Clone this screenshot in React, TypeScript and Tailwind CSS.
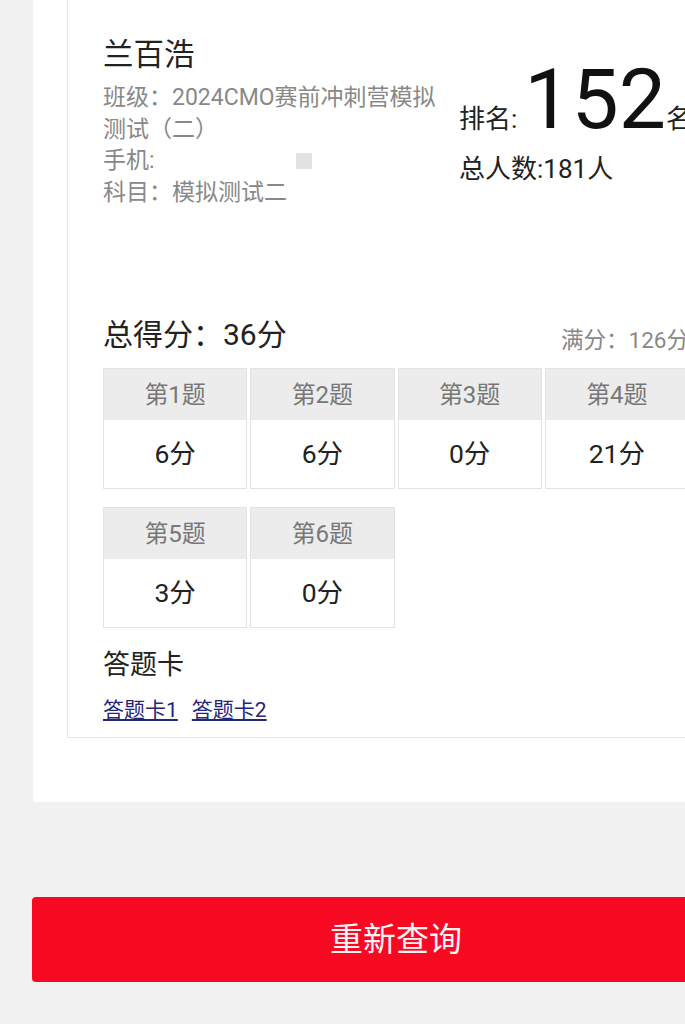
import React from "react";

const scores = [
  { q: "第1题", s: "6分" },
  { q: "第2题", s: "6分" },
  { q: "第3题", s: "0分" },
  { q: "第4题", s: "21分" },
  { q: "第5题", s: "3分" },
  { q: "第6题", s: "0分" },
];

export default function App() {
  return (
    <div className="w-full min-h-[1024px] overflow-hidden bg-[#f1f1f1] font-['Roboto','Noto_Sans_CJK_SC',sans-serif]">
      <div className="w-[792px]">
        <div className="mx-[33px] bg-white pb-[64px]">
          <div className="mx-[34px] border-x border-b border-[#e6e6e6] px-[35px] pt-[35px] pb-[13px]">
            {/* header */}
            <div className="flex">
              <div className="w-[344px] shrink-0">
                <div className="text-[30.5px] leading-[40px] text-[#222]">兰百浩</div>
                <div className="mt-[7px] text-[23px] leading-[31.5px] text-[#888]">
                  <div>班级：2024CMO赛前冲刺营模拟测试（二）</div>
                  <div>
                    手机:
                    <span className="ml-[141px] inline-block h-[16px] w-[16px] bg-[#e2e2e2] align-[-1px]"></span>
                  </div>
                  <div>科目：模拟测试二</div>
                </div>
              </div>
              <div className="ml-[12px] pt-[23px] text-[#222] whitespace-nowrap">
                <div className="flex items-baseline leading-none">
                  <span className="text-[26px]">排名:</span>
                  <span className="ml-[7px] text-[84px] text-[#111]">152</span>
                  <span className="text-[26px]">名</span>
                </div>
                <div className="mt-[10px] text-[26px] leading-[34px]">总人数:181人</div>
              </div>
            </div>

            {/* total */}
            <div className="mt-[107px] flex items-end justify-between whitespace-nowrap">
              <div className="text-[30px] leading-[40px] text-[#222]">总得分：36分</div>
              <div className="text-[22.5px] leading-[30px] text-[#888]">满分：126分</div>
            </div>

            {/* grid */}
            <div className="mt-[13px] grid grid-cols-4 gap-x-[3px] gap-y-[18px]">
              {scores.map((c) => (
                <div key={c.q} className="border border-[#e3e3e3]">
                  <div className="flex h-[51px] items-center justify-center bg-[#ececec] text-[24px] text-[#777]">
                    {c.q}
                  </div>
                  <div className="flex h-[68px] items-center justify-center bg-white text-[26.5px] text-[#222]">
                    {c.s}
                  </div>
                </div>
              ))}
            </div>

            <div className="mt-[19px] text-[27px] leading-[36px] text-[#222]">答题卡</div>
            <div className="mt-[13px] flex gap-[14px] text-[21px] leading-[28px] text-[#25257a]">
              <a href="#" className="underline">答题卡1</a>
              <a href="#" className="underline">答题卡2</a>
            </div>
          </div>
        </div>

        <button className="mx-[32px] mt-[95px] flex h-[85px] w-[728px] items-center justify-center rounded-[4px] bg-[#f70a21] text-[33px] text-[#fff4f4]">
          重新查询
        </button>
      </div>
    </div>
  );
}
